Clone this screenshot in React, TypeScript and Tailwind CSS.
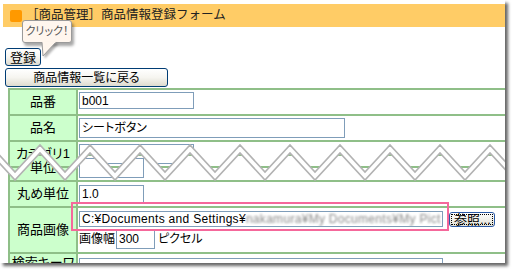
import React from 'react';

// zigzag tear: peaks every 50px, 27px deep
const xs: number[] = [];
for (let x = -10; x <= 540; x += 25) xs.push(x);
const zig = (base: number) => xs.map((x, i) => [x, i % 2 === 0 ? base : base + 27]);

const topLine = zig(5);
const bottomLine = zig(13);
const band = [...topLine, ...[...bottomLine].reverse()].map((p) => p.join(',')).join(' ');
const lowerClip =
  'polygon(' +
  [...zig(0).map(([x, y]) => `${x}px ${y}px`), '540px 400px', '-10px 400px'].join(', ') +
  ')';

function Box({ className, children }: { className: string; children?: React.ReactNode }) {
  return (
    <div
      className={`border border-[#7f9db9] bg-white pl-[2px] text-[12px] leading-none flex items-center whitespace-nowrap overflow-hidden ${className}`}
    >
      {children}
    </div>
  );
}

function Row({
  label,
  className,
  labelClass = 'items-center',
  valueClass = 'items-center',
  children,
}: {
  label: string;
  className: string;
  labelClass?: string;
  valueClass?: string;
  children?: React.ReactNode;
}) {
  return (
    <div className={`flex gap-[2px] ${className}`}>
      <div className={`w-[66px] shrink-0 bg-[#ccffcc] flex justify-center text-center text-[13px] ${labelClass}`}>
        {label}
      </div>
      <div className={`flex-1 bg-white pl-[1px] flex ${valueClass}`}>{children}</div>
    </div>
  );
}

const btn =
  'border border-[#003c74] rounded-[3px] bg-linear-to-b from-white via-[#f6f5f0] to-[#dedbcf] flex items-center justify-center leading-none';

const App: React.FC = () => {
  return (
    <div className="w-[512px] h-[273px] bg-white overflow-hidden text-black font-['Liberation_Sans','Noto_Sans_CJK_JP',sans-serif] [font-feature-settings:'palt']">
      <div className="relative w-[505px] h-[263px] bg-white overflow-hidden shadow-[3px_3px_3px_rgba(0,0,0,0.6)]">
        {/* タイトルバー */}
        <div className="ml-[3px] mt-[4px] h-[23px] bg-[#ffcc66] flex items-center">
          <div className="ml-[7px] w-[12px] h-[12px] bg-[#ff9900] rounded-[2px]" />
          <span className="ml-[4px] text-[12.5px] text-[#222] leading-none [font-feature-settings:normal]">
            ［商品管理］商品情報登録フォーム
          </span>
        </div>

        <div className={`ml-[5px] mt-[21px] w-[36px] h-[18px] text-[13px] ${btn}`}>登録</div>
        <div className={`ml-[5px] mt-[2px] w-[163px] h-[19px] text-[12px] ${btn}`}>商品情報一覧に戻る</div>

        {/* 上半分 */}
        <div className="ml-[8px] mt-[1px] h-[92px] overflow-hidden">
          <div className="w-[510px] bg-[#8fbf88] p-[2px] flex flex-col gap-[2px]">
            <Row label="品番" className="h-[24px]" valueClass="items-start pt-[2px]">
              <Box className="w-[115px] h-[17px]">b001</Box>
            </Row>
            <Row label="品名" className="h-[24px]">
              <Box className="w-[266px] h-[20px]">シートボタン</Box>
            </Row>
            <Row label="カテゴリ1" className="h-[24px]">
              <Box className="w-[115px] h-[20px]" />
            </Row>
            <Row label="" className="h-[24px]" />
          </div>
        </div>

        {/* 下半分 */}
        <div className="relative -mt-[27px] bg-white pt-[1px]" style={{ clipPath: lowerClip }}>
          <div className="ml-[8px] w-[510px] bg-[#8fbf88] p-[2px] flex flex-col gap-[2px]">
            <Row label="単位" className="h-[24px]">
              <Box className="w-[65px] h-[20px]" />
            </Row>
            <Row label="丸め単位" className="h-[24px]">
              <Box className="w-[65px] h-[19px]">1.0</Box>
            </Row>
            <Row label="商品画像" className="h-[44px]" valueClass="flex-col items-start pt-[3px]">
              <div className="flex items-center">
                <Box className="w-[364px] h-[16px] tracking-[0.3px]">
                  C:¥Documents and Settings¥
                  <span className="blur-[1.2px] text-[#8a8a8a]">nakamura¥My Documents¥My Pict</span>
                </Box>
                <div className="ml-[6px] w-[46px] h-[15px] border border-[#2b5aa6] rounded-[3px] bg-linear-to-b from-white to-[#e3e1d6] p-[1px]">
                  <div className="h-full border border-dotted border-black flex items-center pl-[2px] text-[13px] leading-none">
                    参照...
                  </div>
                </div>
              </div>
              <div className="flex items-center mt-[2px] text-[12px] leading-none">
                <span>画像幅</span>
                <Box className="ml-[1px] w-[39px] h-[20px]">300</Box>
                <span className="ml-[3px]">ピクセル</span>
              </div>
            </Row>
            <Row
              label="検索キーワード"
              className="h-[40px]"
              labelClass="items-start pt-[1px] leading-[15px]"
              valueClass="items-start pt-[4px]"
            >
              <Box className="w-[364px] h-[20px]" />
            </Row>
          </div>
        </div>

        {/* 破れ目 */}
        <svg className="absolute left-0 top-[140px] pointer-events-none" width="505" height="45">
          <polygon points={band} fill="#fff" />
          <polyline points={topLine.map((p) => p.join(',')).join(' ')} fill="none" stroke="#b3b3b3" strokeWidth="1.6" />
          <polyline points={bottomLine.map((p) => p.join(',')).join(' ')} fill="none" stroke="#b3b3b3" strokeWidth="1.6" />
        </svg>

        {/* 強調枠 */}
        <div className="absolute left-[71px] top-[202px] w-[378px] h-[29px] border-2 border-[#f5689b]" />

        {/* 吹き出し */}
        <div className="absolute left-[22px] top-[20px] w-[50px] h-[23px] bg-[#fff6ee] border border-[#9a9a9a] rounded-[3px] shadow-[2px_3px_3px_rgba(0,0,0,0.35)] flex items-center justify-center text-[11px] text-[#555] leading-none">
          クリック！
        </div>
        <svg className="absolute left-[38px] top-[41px] drop-shadow-[2px_2px_1px_rgba(0,0,0,0.3)]" width="22" height="18">
          <polygon points="4,1 5,15 18,1" fill="#fff6ee" />
          <polyline points="4,1 5,15 18,1" fill="none" stroke="#9a9a9a" strokeWidth="1" />
          <line x1="4.5" y1="1" x2="17.5" y2="1" stroke="#fff6ee" strokeWidth="1.2" />
        </svg>
      </div>
    </div>
  );
};

export default App;
